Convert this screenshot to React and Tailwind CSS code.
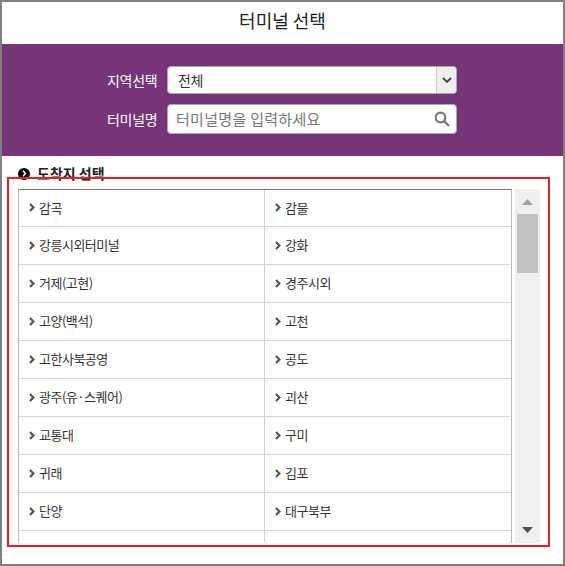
import React from 'react';

const rows = [
  ['감곡', '감물'],
  ['강릉시외터미널', '강화'],
  ['거제(고현)', '경주시외'],
  ['고양(백석)', '고천'],
  ['고한사북공영', '공도'],
  ['광주(유·스퀘어)', '괴산'],
  ['교통대', '구미'],
  ['귀래', '김포'],
  ['단양', '대구북부'],
  ['', ''],
];

const Chevron = () => (
  <svg width="6" height="9" viewBox="0 0 6 9" className="shrink-0">
    <path d="M1 1l3.4 3.5L1 8" fill="none" stroke="#555" strokeWidth="2.2" />
  </svg>
);

const Terminal = ({ name }) => (
  <div className="flex items-center gap-[4px] pl-[10px] w-[245px] h-full pb-[1px] text-[13px] tracking-[-0.5px] text-[#333]">
    {name && <Chevron />}
    {name}
  </div>
);

export default function App() {
  return (
    <div className="relative w-[565px] h-[566px] border-2 border-[#808080] bg-white font-['Noto_Sans_CJK_KR',sans-serif]">
      <h1 className="h-[42px] pb-[5px] flex items-center justify-center text-[18px] font-normal text-[#222]">터미널 선택</h1>

      <div className="h-[112px] bg-[#763578] pl-[105px] pt-[22px]">
        <div className="flex items-center">
          <label className="w-[50px] text-[14px] tracking-[-0.3px] text-white whitespace-nowrap">지역선택</label>
          <div className="ml-[10px] flex w-[290px] h-[28px] rounded-[4px] border border-[#aaa] bg-white overflow-hidden">
            <span className="flex-1 pl-[10px] text-[14px] tracking-[-0.4px] leading-[26px] text-[#333]">전체</span>
            <span className="w-[20px] flex items-center justify-center border-l border-[#ccc] bg-[#efefef]">
              <svg width="10" height="7" viewBox="0 0 10 7">
                <path d="M1 1l4 4 4-4" fill="none" stroke="#444" strokeWidth="1.8" />
              </svg>
            </span>
          </div>
        </div>
        <div className="flex items-center mt-[10px]">
          <label className="w-[50px] text-[14px] tracking-[-0.3px] text-white whitespace-nowrap">터미널명</label>
          <div className="ml-[10px] flex items-center w-[290px] h-[30px] rounded-[4px] border border-[#aaa] bg-white pl-[8px] pr-[6px]">
            <span className="flex-1 text-[15px] tracking-[0.3px] text-[#777]">터미널명을 입력하세요</span>
            <svg width="16" height="16" viewBox="0 0 16 16">
              <circle cx="6.5" cy="6.5" r="4.8" fill="none" stroke="#777" strokeWidth="2.2" />
              <path d="M10 10l5 5" stroke="#777" strokeWidth="2.4" />
            </svg>
          </div>
        </div>
      </div>

      <div className="pl-[16px] pt-[9px]">
        <div className="flex items-center gap-[7px] h-[17px]">
          <span className="w-[12px] h-[12px] rounded-full bg-black flex items-center justify-center">
            <svg width="5" height="7" viewBox="0 0 5 7">
              <path d="M1 .8l2.4 2.7L1 6.2" fill="none" stroke="#fff" strokeWidth="1.5" />
            </svg>
          </span>
          <h2 className="text-[14px] font-bold text-[#222]">도착지 선택</h2>
        </div>

        <div className="flex mt-[7px] h-[354px]">
          <div className="w-[494px] border-t border-t-[#777] border-l border-r border-[#bbb] overflow-hidden">
            {rows.map((row, i) => (
              <div key={i} className={`flex shrink-0 border-b border-[#d5d5d5] ${i === 0 ? 'h-[37px]' : 'h-[38px]'}`}>
                <div className="border-r border-[#d0d0d0]">
                  <Terminal name={row[0]} />
                </div>
                <Terminal name={row[1]} />
              </div>
            ))}
          </div>
          <div className="ml-[3px] w-[25px] bg-[#efefef] flex flex-col items-center">
            <svg width="11" height="6" viewBox="0 0 11 6" className="mt-[10px]">
              <path d="M5.5 0L11 6H0z" fill="#a3a3a3" />
            </svg>
            <div className="mt-[9px] w-[21px] h-[59px] bg-[#c1c1c1]" />
            <svg width="11" height="6" viewBox="0 0 11 6" className="mt-auto mb-[10px]">
              <path d="M0 0h11L5.5 6z" fill="#505050" />
            </svg>
          </div>
        </div>
      </div>

      <div className="absolute left-[5px] top-[175px] w-[543px] h-[370px] border-2 border-[#ed1c24] pointer-events-none" />
    </div>
  );
}
